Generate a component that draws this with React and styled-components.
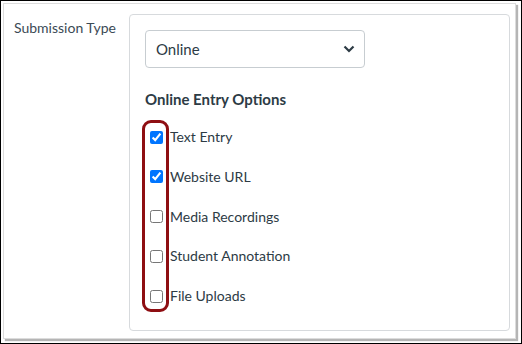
import React, { useState } from 'react';
import styled, { createGlobalStyle } from 'styled-components';

const GlobalStyle = createGlobalStyle`
  html, body { margin: 0; padding: 0; background: #fff; }
  body { font-family: Lato, "Noto Sans", sans-serif; color: #2d3b45; }
`;

const Screen = styled.div`
  width: 522px;
  height: 344px;
  box-sizing: border-box;
  border: 1px solid #000;
  background: #fff;
  padding: 2px 5px 4px 2px;
`;

const Frame = styled.div`
  height: 100%;
  box-sizing: border-box;
  border: 1px solid #dcdcdc;
  box-shadow: 2px 2px 1px #b5b5b5;
  display: grid;
  grid-template-columns: 115px 381px;
  align-items: start;
  padding: 10px 0 0 10px;
`;

const FieldLabel = styled.div`
  font-size: 14px;
  line-height: 20px;
  padding-top: 4px;
  color: #3b4a55;
`;

const Panel = styled.div`
  box-sizing: border-box;
  height: 317px;
  border: 1px solid #d7dadd;
  border-radius: 4px;
  padding: 15px 15px 0 15px;
`;

const SelectWrap = styled.div`
  position: relative;
  width: 220px;
  height: 38px;
`;

const Select = styled.select`
  appearance: none;
  width: 100%;
  height: 100%;
  box-sizing: border-box;
  border: 1px solid #c7cdd1;
  border-radius: 4px;
  background: #fff;
  font-family: Lato, "Noto Sans", sans-serif;
  font-size: 15px;
  color: #2d3b45;
  padding: 0 10px;
`;

const Chevron = styled.svg`
  position: absolute;
  right: 10px;
  top: 15px;
  pointer-events: none;
`;

const GroupTitle = styled.div`
  font-weight: 700;
  font-size: 15px;
  line-height: 20px;
  margin-top: 21px;
`;

const OptionList = styled.div`
  position: relative;
  margin-top: 18px;
  display: flex;
  flex-direction: column;
  gap: 19.75px;
  padding-left: 5px;
`;

const Option = styled.label`
  display: flex;
  align-items: center;
  gap: 7px;
  font-size: 14px;
  line-height: 20px;
  height: 20px;
`;

const Box = styled.input`
  margin: 0;
  width: 13px;
  height: 13px;
`;

const Highlight = styled.div`
  position: absolute;
  left: -3px;
  top: -7px;
  width: 27px;
  height: 192px;
  box-sizing: border-box;
  border: 3px solid #8e0e12;
  border-radius: 9px;
  pointer-events: none;
`;

const options = [
  { name: 'Text Entry', checked: true },
  { name: 'Website URL', checked: true },
  { name: 'Media Recordings', checked: false },
  { name: 'Student Annotation', checked: false },
  { name: 'File Uploads', checked: false },
];

const App = () => {
  const [checked, setChecked] = useState(options.map(o => o.checked));

  const toggle = (i) => {
    const next = [...checked];
    next[i] = !next[i];
    setChecked(next);
  };

  return (
    <>
      <GlobalStyle />
      <Screen>
        <Frame>
          <FieldLabel>Submission Type</FieldLabel>
          <Panel>
            <SelectWrap>
              <Select defaultValue='online'>
                <option value='online'>Online</option>
                <option value='paper'>On Paper</option>
                <option value='none'>No Submission</option>
              </Select>
              <Chevron width='12' height='8' viewBox='0 0 12 8'>
                <path d='M1.5 1.5 L6 6 L10.5 1.5' fill='none' stroke='#2d3b45' strokeWidth='2.2' />
              </Chevron>
            </SelectWrap>
            <GroupTitle>Online Entry Options</GroupTitle>
            <OptionList>
              {options.map((o, i) => (
                <Option key={o.name}>
                  <Box type='checkbox' checked={checked[i]} onChange={() => toggle(i)} />
                  {o.name}
                </Option>
              ))}
              <Highlight />
            </OptionList>
          </Panel>
        </Frame>
      </Screen>
    </>
  );
};

export default App;
